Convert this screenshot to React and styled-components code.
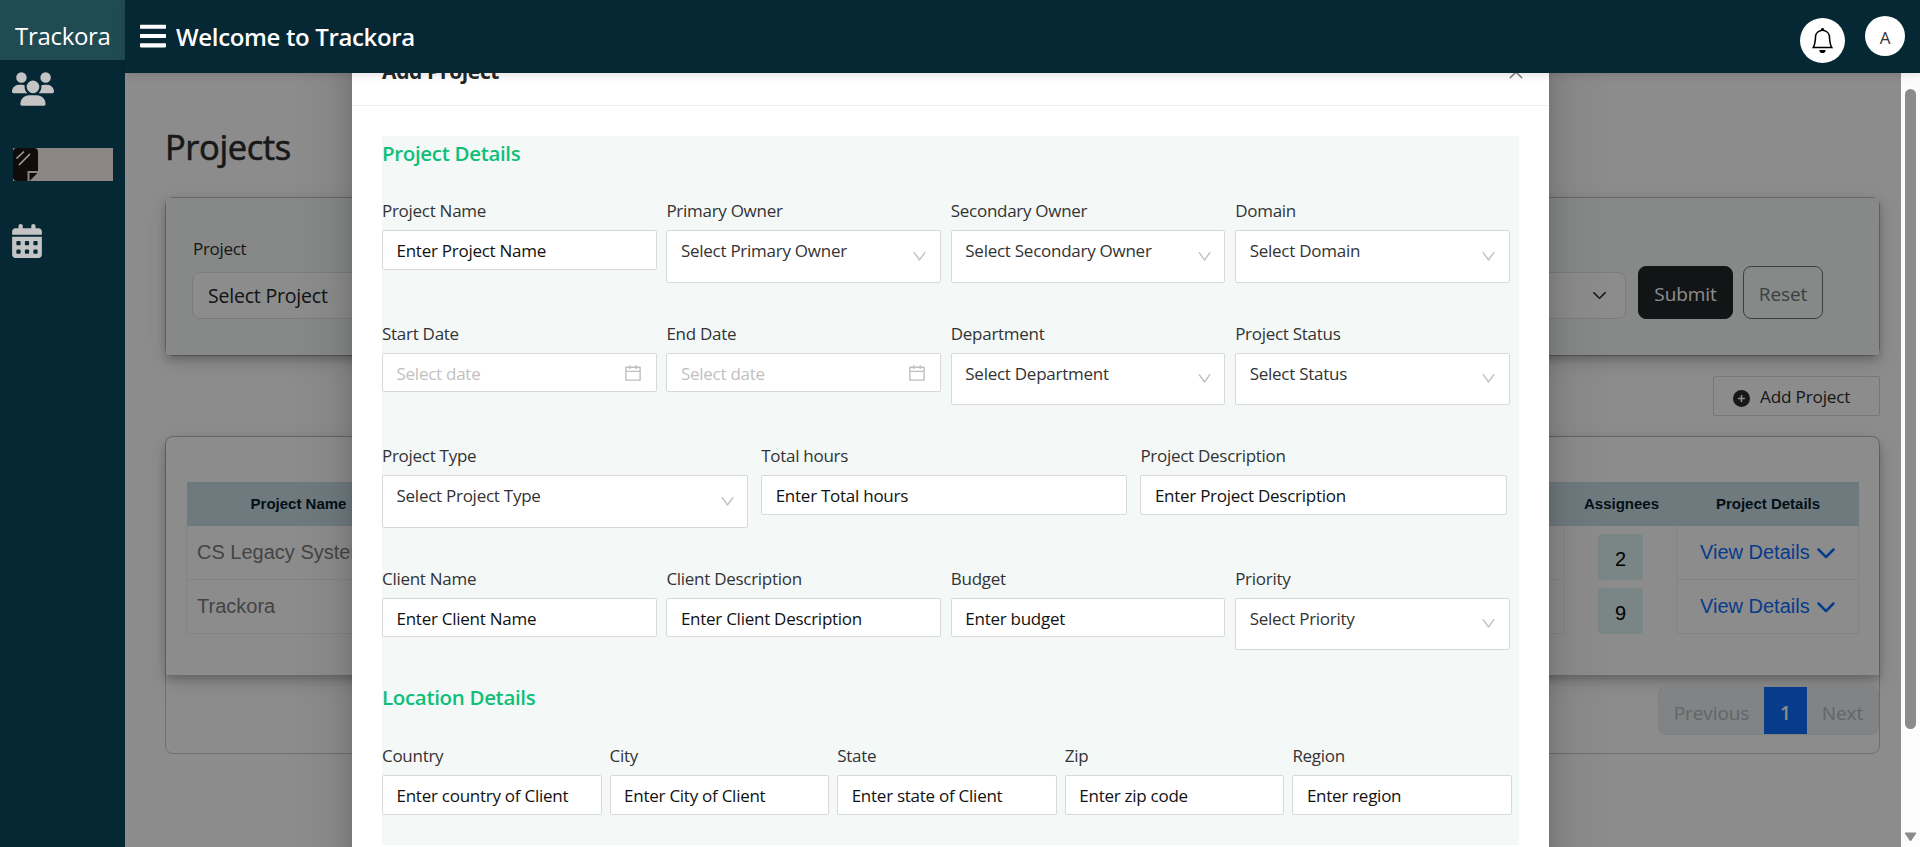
import React from "react";
import styled, { createGlobalStyle } from "styled-components";
import { FaBars } from "react-icons/fa";
import { FaUsers, FaCalendarDays, FaChevronDown, FaCirclePlus } from "react-icons/fa6";
import { BsBell, BsChevronDown } from "react-icons/bs";
import { AiOutlineCalendar, AiOutlineClose, AiOutlineDown } from "react-icons/ai";

const ui = `"Segoe UI", "Open Sans", "Noto Sans", sans-serif`;
const arial = `"Liberation Sans", Arial, sans-serif`;

const Global = createGlobalStyle`
  * { box-sizing: border-box; }
  body { margin: 0; font-family: ${ui}; overflow: hidden; background: #fff; }
  svg { display: block; flex: none; }
`;

const Shell = styled.div`
  position: relative;
  width: 1920px;
  height: 847px;
  display: grid;
  grid-template-columns: 125px 1fr;
  grid-template-rows: 73px 1fr;
  overflow: hidden;
`;

const Sidebar = styled.aside`
  grid-row: 1 / 3;
  background: #062734;
  z-index: 5;
  display: flex;
  flex-direction: column;
`;
const Brand = styled.div`
  height: 60px;
  background: #214b52;
  color: #fff;
  font-size: 24px;
  line-height: 33px;
  letter-spacing: -0.3px;
  padding: 19px 0 0 15px;
`;
const Nav = styled.nav`
  display: flex;
  flex-direction: column;
  padding: 12px 12px 0;
  color: #c4c4c4;
`;
const NavItem = styled.div`
  height: ${(p) => p.$h}px;
  margin-bottom: ${(p) => (p.$active ? 43 : 42)}px;
  background: ${(p) => (p.$active ? "#8c8785" : "transparent")};
  margin-left: ${(p) => (p.$active ? 1 : 0)}px;
`;

const Header = styled.header`
  background: #062734;
  z-index: 5;
  color: #fff;
  display: flex;
  align-items: flex-start;
  padding-left: 15px;
  box-shadow: 0 2px 8px rgba(0, 0, 0, 0.12);
`;
const HeaderTitle = styled.h1`
  margin: 20px auto 0 10px;
  font-size: 24px;
  line-height: 33px;
  font-weight: 600;
  letter-spacing: -0.35px;
`;
const BarsBox = styled.span`
  margin-top: 21px;
`;
const Round = styled.div`
  width: ${(p) => p.$s}px;
  height: ${(p) => p.$s}px;
  margin-top: ${(p) => p.$top}px;
  margin-right: ${(p) => p.$right}px;
  border-radius: 50%;
  background: #fff;
  color: ${(p) => p.$color};
  display: flex;
  align-items: center;
  justify-content: center;
  font-size: 17px;
`;
const Initial = styled.span`
  padding-top: 3px;
`;

const Main = styled.main`
  position: relative;
  padding: 0 40px 0 40px;
  background: #fff;
  color: #2c2c2c;
`;
const Heading = styled.h2`
  margin: 49px 0 0;
  height: 75px;
  font-size: 34.5px;
  font-weight: 400;
  -webkit-text-stroke: 0.6px currentColor;
  line-height: 50px;
  letter-spacing: -0.4px;
`;
const Outline = styled.section`
  border: 1px solid #c8c8c8;
  border-radius: 8px;
  height: ${(p) => p.$h}px;
`;
const FilterBody = styled.div`
  height: 157px;
  background: #f4f9f8;
  box-shadow: 0 4px 8px rgba(0, 0, 0, 0.2), 0 6px 20px rgba(0, 0, 0, 0.15);
  padding: 37px 56px 0 26px;
  display: flex;
  justify-content: space-between;
`;
const FilterField = styled.div`
  display: flex;
  flex-direction: column;
  width: 1434px;
`;
const FilterLabel = styled.label`
  font-size: 17px;
  line-height: 24px;
  letter-spacing: -0.3px;
  padding-left: 1px;
  padding-top: 2px;
`;
const FilterSelect = styled.div`
  margin-top: 11px;
  height: 47px;
  border: 1px solid #dee2e6;
  border-radius: 8px;
  background: #fff;
  padding: 0 18px 0 15px;
  display: flex;
  align-items: center;
  justify-content: space-between;
  font-size: 19.5px;
  letter-spacing: -0.2px;
  color: #212529;
`;
const Actions = styled.div`
  display: flex;
  gap: 10px;
  padding-top: 31px;
`;
const Action = styled.div`
  width: ${(p) => p.$w}px;
  height: 53px;
  border-radius: 8px;
  border: 1px solid ${(p) => (p.$solid ? "#212529" : "#6c757d")};
  background: ${(p) => (p.$solid ? "#212529" : "transparent")};
  color: ${(p) => (p.$solid ? "#fff" : "#6c757d")};
  font-size: 19px;
  letter-spacing: -0.1px;
  display: flex;
  align-items: center;
  justify-content: center;
  padding-top: 2px;
`;
const AddButton = styled.div`
  margin: 20px 0 20px auto;
  width: 167px;
  height: 40px;
  border: 1px solid #d9d9d9;
  border-radius: 2px;
  display: flex;
  align-items: center;
  gap: 10px;
  padding-left: 19px;
  font-size: 17.2px;
  letter-spacing: -0.2px;
`;
const AddIcon = styled.span`
  padding-top: 5px;
`;
const TableCard = styled.div`
  height: 238px;
  border-radius: 8px 8px 0 0;
  box-shadow: 0 4px 8px rgba(0, 0, 0, 0.2), 0 6px 20px rgba(0, 0, 0, 0.15);
  padding: 45px 20px 0 20px;
  font-family: ${arial};
`;
const columns = "223px 1156px 111px 1fr";
const HeadRow = styled.div`
  height: 44px;
  margin-left: 1px;
  display: grid;
  grid-template-columns: ${columns};
  align-items: center;
  text-align: center;
  background: #cbdfe8;
  color: #04202c;
  font-size: 15px;
  font-weight: 700;
  padding-bottom: 1px;
`;
const BodyRow = styled.div`
  height: 54px;
  display: grid;
  grid-template-columns: ${columns};
  font-size: 20px;
  color: #7c7c7c;
`;
const Cell = styled.div`
  border: ${(p) => (p.$plain ? "0" : "1px solid #f0f0f0")};
  border-top: 0;
  padding: ${(p) => (p.$plain ? "8px 0 0" : "14.5px 0 0 10px")};
  white-space: nowrap;
`;
const Count = styled.div`
  width: 45px;
  height: 46px;
  margin: 0 auto;
  border-radius: 4px;
  background: #def3f3;
  color: #000;
  text-align: center;
  line-height: 50px;
`;
const Details = styled.div`
  display: flex;
  gap: 6px;
  padding-left: 13px;
  color: #0d6efd;
  align-items: center;
  line-height: 23px;
`;
const Pager = styled.div`
  margin: 11px 0 0 auto;
  width: 221px;
  height: 49px;
  display: flex;
  border: 1px solid #e3e7ea;
  border-radius: 8px;
  background: #eceff2;
  overflow: hidden;
  font-size: 19px;
  letter-spacing: -0.1px;
`;
const Page = styled.div`
  width: ${(p) => p.$w}px;
  display: flex;
  align-items: center;
  justify-content: center;
  padding-top: 4px;
  background: ${(p) => (p.$on ? "#0d6efd" : "transparent")};
  color: ${(p) => (p.$on ? "#fff" : "#b4babf")};
  font-weight: ${(p) => (p.$on ? 600 : 400)};
`;

const Mask = styled.div`
  position: absolute;
  inset: 0;
  background: rgba(0, 0, 0, 0.45);
  z-index: 2;
`;
const Modal = styled.div`
  position: absolute;
  z-index: 3;
  left: 352px;
  top: 36px;
  width: 1197px;
  height: 900px;
  background: #fff;
  box-shadow: 0 4px 8px -5px rgba(0, 0, 0, 0.12), 0 8px 20px rgba(0, 0, 0, 0.12),
    0 11px 50px 10px rgba(0, 0, 0, 0.12);
`;
const ModalHead = styled.div`
  height: 70px;
  border-bottom: 1px solid #f0f0f0;
  display: flex;
  justify-content: space-between;
  align-items: center;
  padding: 0 23px 0 30px;
  color: #262626;
  font-size: 21px;
  font-weight: 700;
  letter-spacing: -0.35px;
`;
const CloseBox = styled.span`
  color: #8c8c8c;
  padding-top: 3px;
`;
const Panel = styled.div`
  margin: 30px 30px 0;
  height: 709px;
  background: #f4f9f8;
  overflow: hidden;
`;
const SectionTitle = styled.h3`
  margin: ${(p) => p.$mt}px 0 0;
  height: ${(p) => p.$h}px;
  color: #0fbf77;
  font-size: 20.5px;
  line-height: 28px;
  font-weight: 600;
  letter-spacing: -0.33px;
`;
const FormRow = styled.div`
  display: grid;
  grid-template-columns: repeat(${(p) => p.$n}, ${(p) => p.$w}px);
  column-gap: ${(p) => p.$gap}px;
  height: 122.5px;
`;
const Label = styled.label`
  display: block;
  height: 31.3px;
  line-height: 24px;
  font-size: 17px;
  letter-spacing: -0.28px;
  color: #333;
`;
const Control = styled.div`
  height: ${(p) => (p.$tall ? 52.4 : 39.6)}px;
  border: 1px solid #d9d9d9;
  border-radius: 2px;
  background: #fff;
  color: ${(p) => p.$color};
  padding: 0 14px 0 13.5px;
  display: flex;
  justify-content: space-between;
  font-size: 17px;
  line-height: 39px;
  letter-spacing: -0.26px;
  white-space: nowrap;
`;
const Trail = styled.span`
  color: #bfbfbf;
  padding-top: ${(p) => p.$top}px;
  margin-right: ${(p) => p.$right}px;
`;

const Scroll = styled.div`
  position: absolute;
  z-index: 4;
  right: 0;
  top: 73px;
  width: 19px;
  height: 774px;
  background: #fcfcfc;
  display: flex;
  flex-direction: column;
  align-items: center;
  justify-content: space-between;
  padding: 16px 0 5px;
`;
const Thumb = styled.div`
  width: 11px;
  height: 640px;
  border-radius: 6px;
  background: #8b8b8b;
`;

function Field({ label, text, kind = "input" }) {
  const color = kind === "date" ? "#bfbfbf" : kind === "select" ? "#333" : "#111";
  return (
    <div>
      <Label>{label}</Label>
      <Control $tall={kind === "select"} $color={color}>
        <span>{text}</span>
        {kind === "select" && (
          <Trail $top={16.5} $right={-2.5}><AiOutlineDown size={17} /></Trail>
        )}
        {kind === "date" && (
          <Trail $top={9} $right={-1}><AiOutlineCalendar size={20} /></Trail>
        )}
      </Control>
    </div>
  );
}

function Row({ items, w = 274.5, gap = 9.9 }) {
  return (
    <FormRow $n={items.length} $w={w} $gap={gap}>
      {items.map(([label, text, kind]) => (
        <Field key={label} label={label} text={text} kind={kind} />
      ))}
    </FormRow>
  );
}

function NoteIcon() {
  return (
    <svg width="25" height="33" viewBox="0 0 25 33">
      <path d="M4 0h17a4 4 0 0 1 4 4v19H14.500v10H4a4 4 0 0 1-4-4V4a4 4 0 0 1 4-4z" fill="#100c0b" />
      <path d="M16.500 25H24.500L16.500 33z" fill="#100c0b" />
      <path d="M3.500 10.500l7.500-7M6 17L17 6" stroke="#a09b99" strokeWidth="1.7" />
    </svg>
  );
}

export default function App() {
  return (
    <Shell>
      <Global />
      <Sidebar>
        <Brand>Trackora</Brand>
        <Nav>
          <NavItem $h={34}><FaUsers style={{ width: 42, height: 34 }} /></NavItem>
          <NavItem $h={33} $active><NoteIcon /></NavItem>
          <NavItem $h={34}><FaCalendarDays style={{ width: 30, height: 34 }} /></NavItem>
        </Nav>
      </Sidebar>
      <Header>
        <BarsBox><FaBars style={{ width: 26, height: 30 }} /></BarsBox>
        <HeaderTitle>Welcome to Trackora</HeaderTitle>
        <Round $s={45} $top={18} $right={20} $color="#000"><BsBell size={25} /></Round>
        <Round $s={40} $top={16} $right={15} $color="#333"><Initial>A</Initial></Round>
      </Header>
      <Main>
        <Heading>Projects</Heading>
        <Outline $h={159}>
          <FilterBody>
            <FilterField>
              <FilterLabel>Project</FilterLabel>
              <FilterSelect>
                <span>Select Project</span>
                <BsChevronDown size={15} strokeWidth={0.8} />
              </FilterSelect>
            </FilterField>
            <Actions>
              <Action $w={95} $solid>Submit</Action>
              <Action $w={80}>Reset</Action>
            </Actions>
          </FilterBody>
        </Outline>
        <AddButton>
          <AddIcon><FaCirclePlus size={17} /></AddIcon>
          <span>Add Project</span>
        </AddButton>
        <Outline $h={318}>
          <TableCard>
            <HeadRow>
              <span>Project Name</span>
              <span />
              <span>Assignees</span>
              <span>Project Details</span>
            </HeadRow>
            {[["CS Legacy System", 2], ["Trackora", 9]].map(([name, n]) => (
              <BodyRow key={name}>
                <Cell>{name}</Cell>
                <Cell />
                <Cell $plain><Count>{n}</Count></Cell>
                <Cell><Details>View Details <FaChevronDown size={20} /></Details></Cell>
              </BodyRow>
            ))}
          </TableCard>
          <Pager>
            <Page $w={105}>Previous</Page>
            <Page $w={43} $on>1</Page>
            <Page $w={71}>Next</Page>
          </Pager>
        </Outline>
      </Main>
      <Mask />
      <Modal>
        <ModalHead>
          <span>Add Project</span>
          <CloseBox><AiOutlineClose size={20} /></CloseBox>
        </ModalHead>
        <Panel>
          <SectionTitle $mt={3} $h={60}>Project Details</SectionTitle>
          <Row items={[
            ["Project Name", "Enter Project Name"],
            ["Primary Owner", "Select Primary Owner", "select"],
            ["Secondary Owner", "Select Secondary Owner", "select"],
            ["Domain", "Select Domain", "select"],
          ]} />
          <Row items={[
            ["Start Date", "Select date", "date"],
            ["End Date", "Select date", "date"],
            ["Department", "Select Department", "select"],
            ["Project Status", "Select Status", "select"],
          ]} />
          <Row w={366.3} gap={12.9} items={[
            ["Project Type", "Select Project Type", "select"],
            ["Total hours", "Enter Total hours"],
            ["Project Description", "Enter Project Description"],
          ]} />
          <Row items={[
            ["Client Name", "Enter Client Name"],
            ["Client Description", "Enter Client Description"],
            ["Budget", "Enter budget"],
            ["Priority", "Select Priority", "select"],
          ]} />
          <SectionTitle $mt={-6} $h={61}>Location Details</SectionTitle>
          <Row w={219.6} gap={8} items={[
            ["Country", "Enter country of Client"],
            ["City", "Enter City of Client"],
            ["State", "Enter state of Client"],
            ["Zip", "Enter zip code"],
            ["Region", "Enter region"],
          ]} />
        </Panel>
      </Modal>
      <Scroll>
        <Thumb />
        <svg width="13" height="10" viewBox="0 0 13 10">
          <path d="M1 1h11L6.500 9z" fill="#8b8b8b" stroke="#8b8b8b" strokeLinejoin="round" />
        </svg>
      </Scroll>
    </Shell>
  );
}
